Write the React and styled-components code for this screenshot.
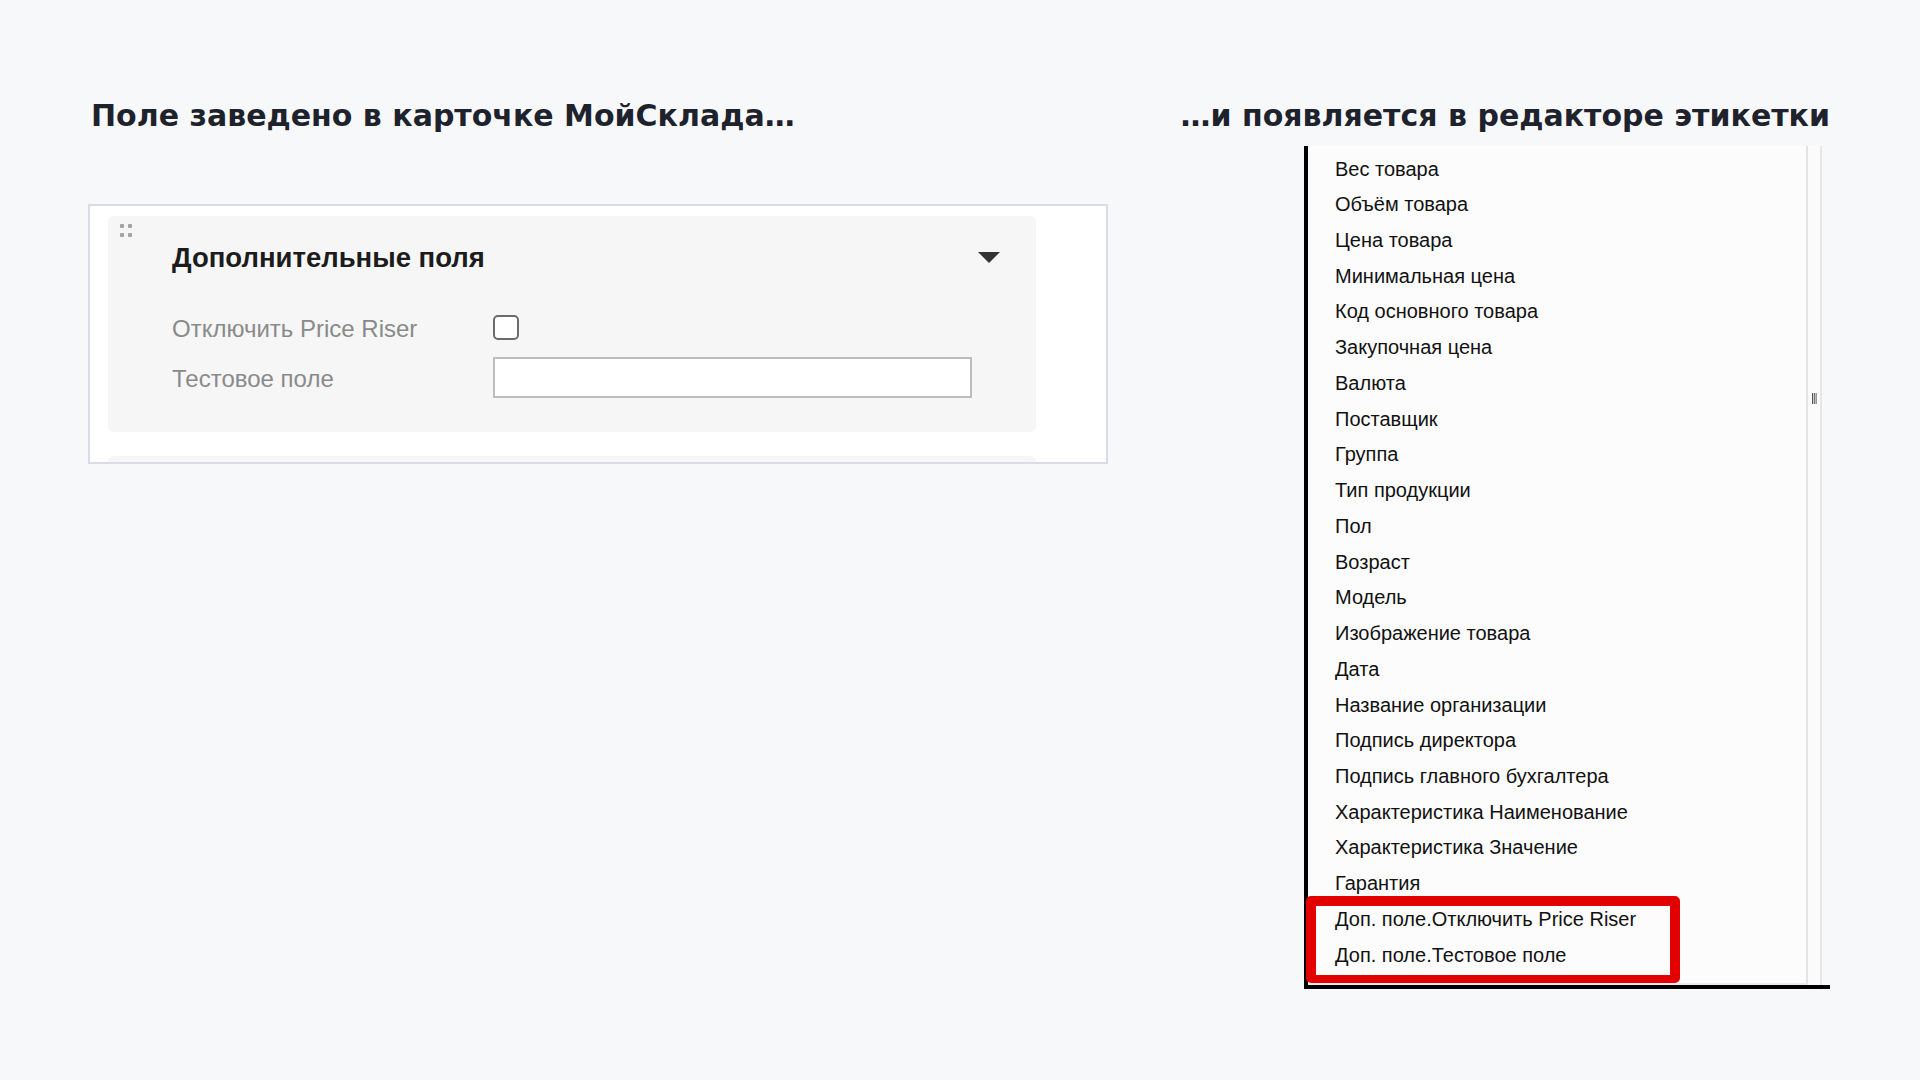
import styled, { createGlobalStyle } from "styled-components";

const GlobalStyle = createGlobalStyle`
  html, body {
    margin: 0;
    padding: 0;
    background: #f7f8fa;
  }
  body {
    font-family: "Liberation Sans", Arial, sans-serif;
  }
`;

const fields = [
  "Вес товара",
  "Объём товара",
  "Цена товара",
  "Минимальная цена",
  "Код основного товара",
  "Закупочная цена",
  "Валюта",
  "Поставщик",
  "Группа",
  "Тип продукции",
  "Пол",
  "Возраст",
  "Модель",
  "Изображение товара",
  "Дата",
  "Название организации",
  "Подпись директора",
  "Подпись главного бухгалтера",
  "Характеристика Наименование",
  "Характеристика Значение",
  "Гарантия",
  "Доп. поле.Отключить Price Riser",
  "Доп. поле.Тестовое поле",
];

const App = () => {
  return (
    <>
      <GlobalStyle />
      <Page>
        <LeftColumn>
          <Heading $indent>Поле заведено в карточке МойСклада…</Heading>
          <Card>
            <Panel>
              <DragHandle>
                <i />
                <i />
                <i />
                <i />
              </DragHandle>
              <PanelHeader>
                <PanelTitle>Дополнительные поля</PanelTitle>
                <Caret />
              </PanelHeader>
              <FieldRow>
                <FieldLabel>Отключить Price Riser</FieldLabel>
                <Checkbox type="checkbox" />
              </FieldRow>
              <FieldRow>
                <FieldLabel>Тестовое поле</FieldLabel>
                <TextInput type="text" />
              </FieldRow>
            </Panel>
            <Panel $stub />
          </Card>
        </LeftColumn>

        <RightColumn>
          <Heading>…и появляется в редакторе этикетки</Heading>
          <ListFrame>
            <ListBody>
              {fields.map((f) => (
                <ListItem key={f}>{f}</ListItem>
              ))}
            </ListBody>
            <Scrollbar>
              <Thumb />
            </Scrollbar>
            <Highlight />
          </ListFrame>
        </RightColumn>
      </Page>
    </>
  );
};

export default App;

const Page = styled.main`
  display: flex;
  justify-content: space-between;
  padding: 0 90px 0 88px;
  min-height: 1080px;
  box-sizing: border-box;
`;

const LeftColumn = styled.section`
  width: 1020px;
  display: flex;
  flex-direction: column;
`;

const RightColumn = styled.section`
  width: 526px;
  display: flex;
  flex-direction: column;
  align-items: flex-end;
`;

const Heading = styled.h2`
  margin: 98px 0 0;
  padding-left: ${(p) => (p.$indent ? "3px" : "0")};
  font-family: "DejaVu Sans", sans-serif;
  font-weight: 700;
  font-size: 30px;
  line-height: 36px;
  letter-spacing: 0;
  color: #1e222c;
  white-space: nowrap;
`;

/* Left: product card */
const Card = styled.div`
  margin-top: 70px;
  height: 260px;
  box-sizing: border-box;
  border: 2px solid #d6dde6;
  background: #fff;
  padding: 10px 70px 0 18px;
  display: flex;
  flex-direction: column;
  gap: 24px;
  overflow: hidden;
`;

const Panel = styled.div`
  position: relative;
  flex-shrink: 0;
  background: #f6f6f6;
  border-radius: 6px;
  padding: 26px 36px 30px 64px;
  height: ${(p) => (p.$stub ? "60px" : "auto")};
  box-sizing: border-box;
`;

const DragHandle = styled.span`
  position: absolute;
  top: 8px;
  left: 12px;
  display: grid;
  grid-template-columns: 4px 4px;
  gap: 5px 4px;
  i {
    width: 4px;
    height: 4px;
    border-radius: 1px;
    background: #a3a3a3;
  }
`;

const PanelHeader = styled.div`
  display: flex;
  align-items: center;
  justify-content: space-between;
  margin-bottom: 28px;
`;

const PanelTitle = styled.h3`
  margin: 0;
  font-family: "Liberation Sans", Arial, sans-serif;
  font-weight: 700;
  font-size: 27.5px;
  line-height: 32px;
  color: #1c1c1c;
`;

const Caret = styled.span`
  width: 0;
  height: 0;
  border-left: 11px solid transparent;
  border-right: 11px solid transparent;
  border-top: 11px solid #333;
  margin-top: -2px;
`;

const FieldRow = styled.div`
  display: grid;
  grid-template-columns: 321px 1fr;
  align-items: center;
  height: 50px;
`;

const FieldLabel = styled.label`
  font-size: 24px;
  line-height: 46px;
  padding-top: 4px;
  color: #8a8a8a;
`;

const Checkbox = styled.input`
  appearance: none;
  margin: 0;
  width: 26px;
  height: 25px;
  box-sizing: border-box;
  border: 2px solid #6b6b6b;
  border-radius: 5px;
  background: #fff;
`;

const TextInput = styled.input`
  margin: 0;
  width: 479px;
  height: 41px;
  box-sizing: border-box;
  border: 2px solid #bdbdbd;
  border-radius: 0;
  background: #fff;
  outline: none;
`;

/* Right: label editor field list */
const ListFrame = styled.div`
  position: relative;
  margin-top: 12px;
  width: 526px;
  height: 843px;
  box-sizing: border-box;
  border-left: 4px solid #000;
  border-bottom: 4px solid #000;
  display: flex;
`;

const ListBody = styled.ul`
  flex: 1;
  margin: 0;
  padding: 5.5px 0 0 27px;
  list-style: none;
  background: #fcfcfc;
  border-right: 2px solid #e4e4e4;
  border-bottom: 2px solid #ececec;
`;

const ListItem = styled.li`
  height: 35.74px;
  line-height: 35.74px;
  font-size: 20px;
  color: #111;
  white-space: nowrap;
`;

const Scrollbar = styled.div`
  position: relative;
  width: 12px;
  background: #fbfbfb;
  border-right: 2px solid #e6e6e6;
  margin-right: 8px;
`;

const Thumb = styled.span`
  position: absolute;
  top: 247px;
  left: 4px;
  width: 5px;
  height: 11px;
  background: linear-gradient(90deg, #555 0 1px, #ccc 1px 2px, #777 2px 3px, #bbb 3px 4px, #999 4px 5px);
`;

const Highlight = styled.span`
  position: absolute;
  left: -2px;
  top: 750px;
  width: 374px;
  height: 87px;
  box-sizing: border-box;
  border: 10px solid #e30000;
  border-bottom-width: 8px;
  border-radius: 5px;
  pointer-events: none;
`;
